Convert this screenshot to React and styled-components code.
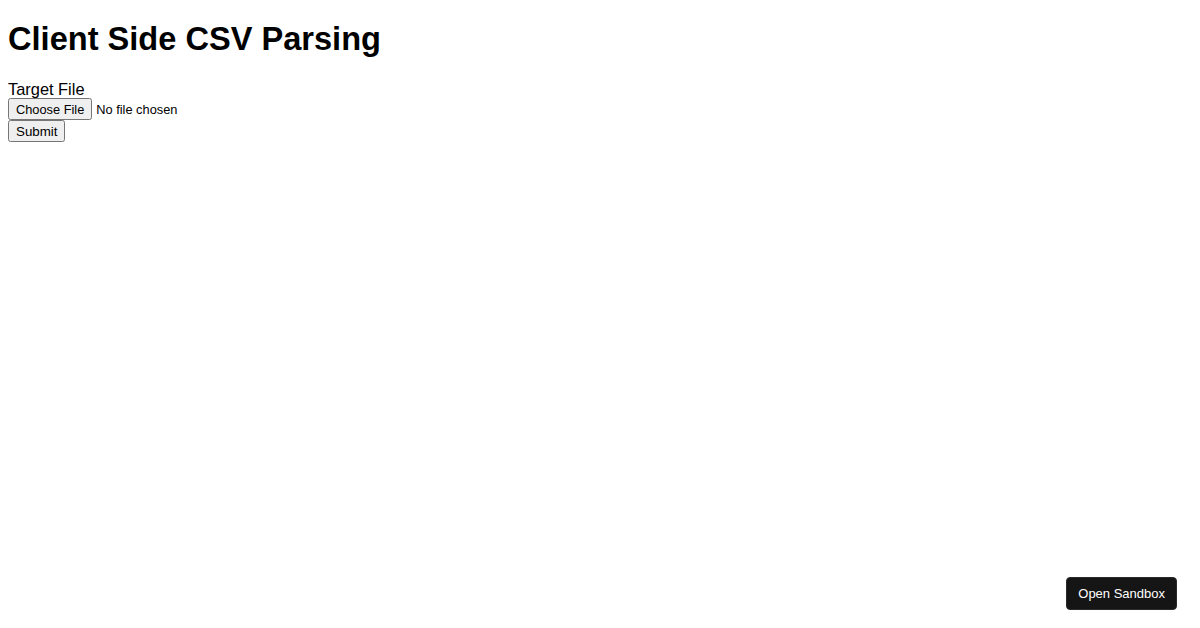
import React from 'react';
import styled, { createGlobalStyle } from 'styled-components';

const GlobalStyle = createGlobalStyle`
  body {
    margin: 8px;
    font-family: "Liberation Sans", Arial, sans-serif;
    background: #fff;
    color: #000;
  }
`;

const Title = styled.h1`
  font-size: 32.6px;
  font-weight: bold;
  margin: 12px 0 22px;
`;

const Form = styled.form`
  display: flex;
  flex-direction: column;
  align-items: flex-start;
`;

const Label = styled.label`
  font-size: 16.4px;
  line-height: 18px;
`;

const FileInput = styled.input`
  font-family: "Liberation Sans", Arial, sans-serif;
  font-size: 12.8px;

  &::file-selector-button {
    height: 22px;
    font-family: inherit;
    font-size: inherit;
  }
`;

const SubmitButton = styled.button`
  font-family: "Liberation Sans", Arial, sans-serif;
  font-size: 13.333px;
  height: 22px;
`;

const SandboxButton = styled.a`
  position: fixed;
  right: 23px;
  bottom: 18px;
  background: #151515;
  color: #fff;
  font-family: "Liberation Sans", Arial, sans-serif;
  font-size: 13px;
  line-height: 15px;
  padding: 8px 11px;
  border-radius: 4px;
  text-decoration: none;
  border: 1px solid #2a2a2a;
`;

function App() {
  return (
    <>
      <GlobalStyle />
      <Title>Client Side CSV Parsing</Title>
      <Form onSubmit={(e) => e.preventDefault()}>
        <Label htmlFor="csv">Target File</Label>
        <FileInput id="csv" type="file" />
        <SubmitButton type="submit">Submit</SubmitButton>
      </Form>
      <SandboxButton href="#">Open Sandbox</SandboxButton>
    </>
  );
}

export default App;
